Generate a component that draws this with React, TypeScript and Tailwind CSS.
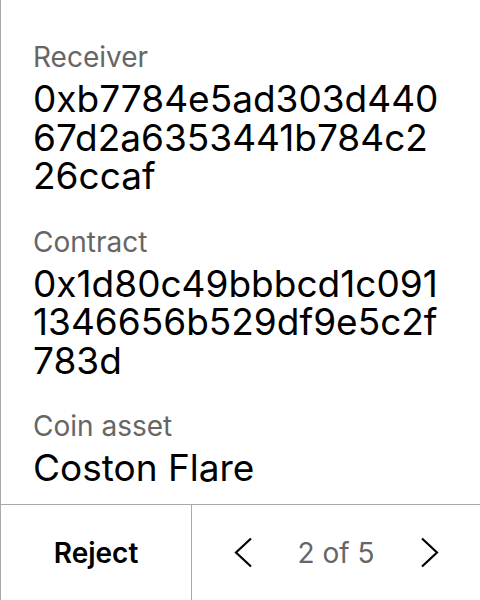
const FIELDS = [
  { label: "Receiver", value: "0xb7784e5ad303d44067d2a6353441b784c226ccaf" },
  { label: "Contract", value: "0x1d80c49bbbcd1c0911346656b529df9e5c2f783d" },
  { label: "Coin asset", value: "Coston Flare" },
];

function Chevron({ dir }: { dir: "left" | "right" }) {
  return (
    <svg width="18" height="31" viewBox="0 0 18 31" fill="none">
      <path
        d={dir === "left" ? "M17 1.5 L2 15.5 L17 29.5" : "M1 1.5 L16 15.5 L1 29.5"}
        stroke="black"
        strokeWidth="2.2"
      />
    </svg>
  );
}

export default function App() {
  return (
    <div className="flex h-[600px] w-[480px] flex-col overflow-hidden border-l border-[#a9a9a9] bg-white font-['Inter',sans-serif] text-black">
      <div className="flex flex-1 flex-col gap-[24px] px-[32px] pt-[35px]">
        {FIELDS.map((f) => (
          <div key={f.label} className="flex flex-col">
            <div className="text-[28px] leading-[45px] text-[#666666]">
              {f.label}
            </div>
            <div className="break-all text-[37px] leading-[38.5px]">
              {f.value}
            </div>
          </div>
        ))}
      </div>

      <div className="flex h-[96px] shrink-0 border-t border-[#a9a9a9]">
        <button
          type="button"
          className="flex w-[191px] items-center justify-center border-r border-[#a9a9a9] text-[28px] font-semibold"
        >
          Reject
        </button>
        <div className="flex flex-1 items-center justify-center gap-[46px]">
          <Chevron dir="left" />
          <span className="text-[28px] text-[#666666]">2 of 5</span>
          <Chevron dir="right" />
        </div>
      </div>
    </div>
  );
}
